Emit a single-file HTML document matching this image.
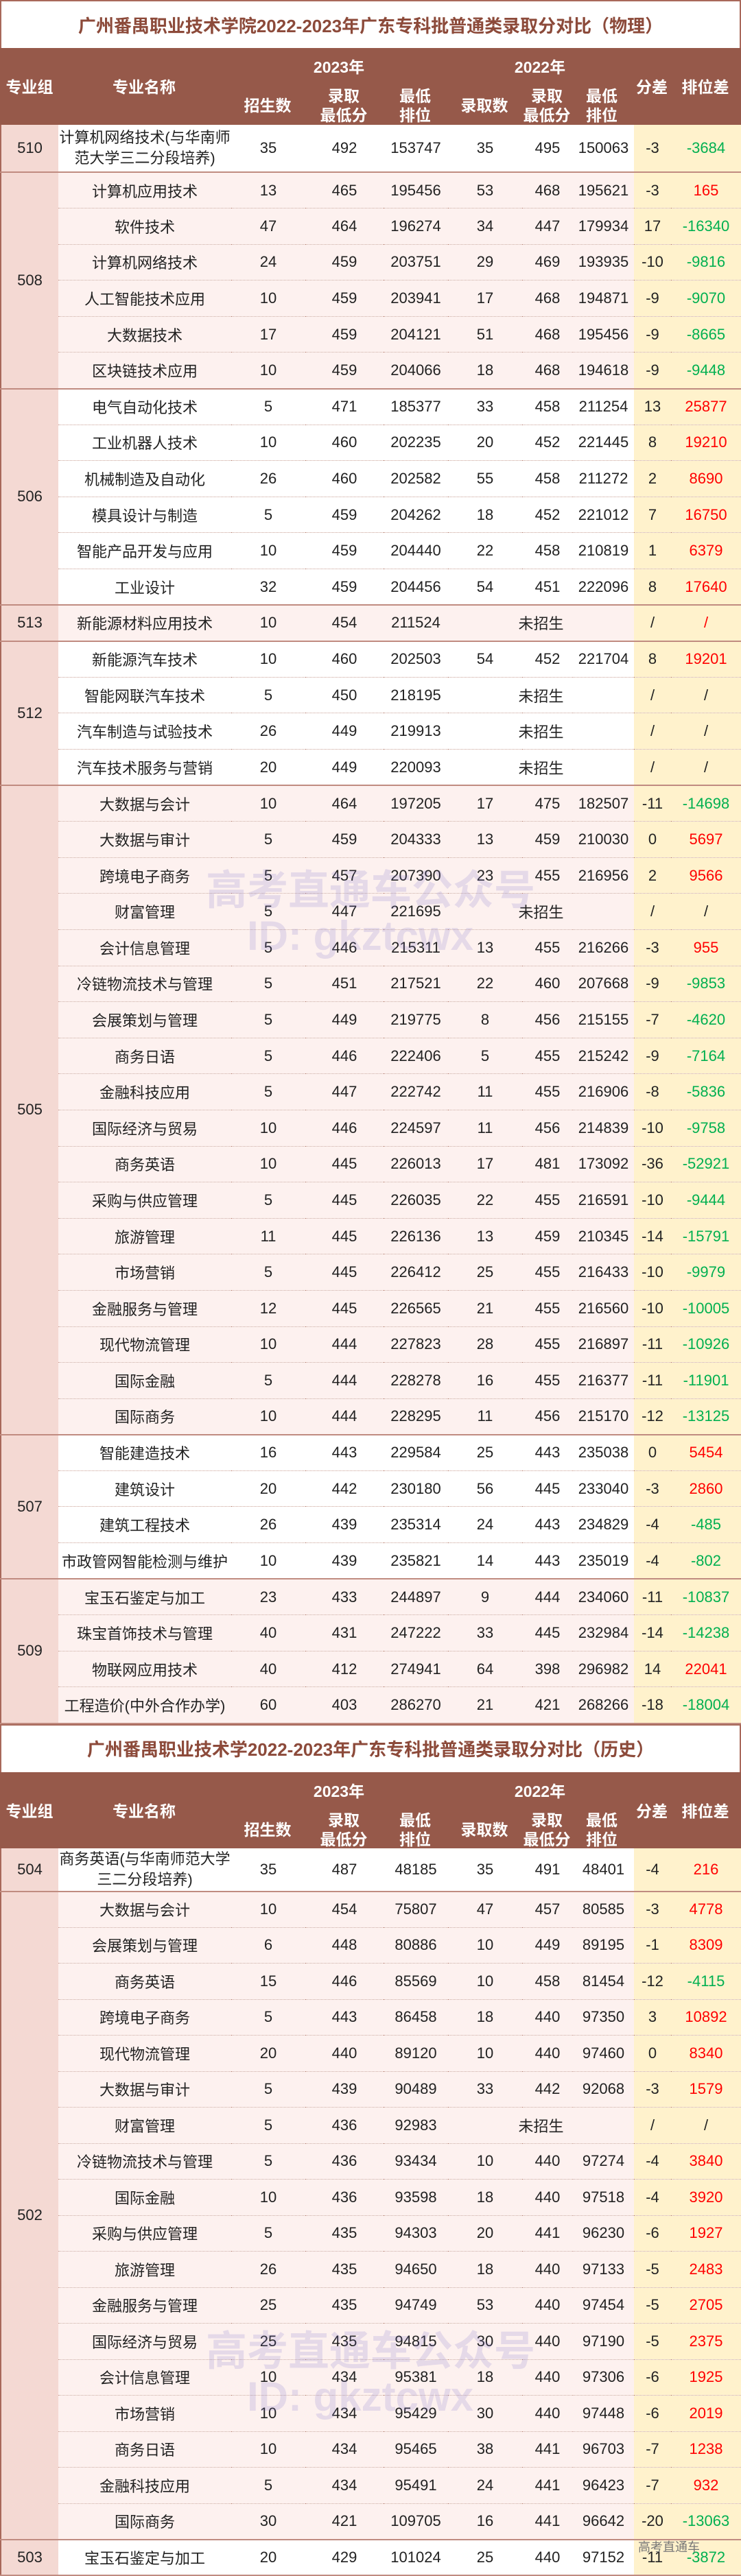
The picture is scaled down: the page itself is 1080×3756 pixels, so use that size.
<!DOCTYPE html>
<html><head><meta charset="utf-8">
<style>
*{margin:0;padding:0;box-sizing:border-box}
body{width:1080px;height:3756px;background:#fff;font-family:"Liberation Sans","Noto Sans CJK SC",sans-serif;color:#222;overflow:hidden;position:relative}
.title{height:70px;border-left:2px solid #A8685A;border-right:2px solid #A8685A;border-top:2px solid #A8685A;display:flex;align-items:center;justify-content:center;color:#8C4A3A;font-weight:bold;font-size:26px;background:#fff}
.hdr{height:112px;background:#96594A;position:relative;color:#fff;font-weight:bold;font-size:23px}
.hdr div{position:absolute;text-align:center;line-height:28px;transform:translate(-50%,-50%);white-space:nowrap}
table{border-collapse:collapse;table-layout:fixed;width:1080px;font-size:22px}
td{padding:0;text-align:center;vertical-align:middle;border-bottom:1px dotted #C9A095;white-space:nowrap;overflow:hidden}
td.g{background:#F4D9D3;border-bottom:2px solid #C08B80;border-left:2px solid #A8685A}
tr.last td{border-bottom:2px solid #C08B80}
td.y{background:#FFF2CC}
td.y2{background:#FFF2CC;border-right:2px solid #A8685A}
.p td:not(.g):not(.y):not(.y2){background:#FDF1EF}
td.n{white-space:normal;line-height:30px}
.r{color:#FF0000}.gr{color:#00B050}
.wm{position:absolute;color:rgba(120,110,200,.18);font-weight:bold;font-size:60px;pointer-events:none}
</style></head><body>

<div class="title">广州番禺职业技术学院2022-2023年广东专科批普通类录取分对比（物理）</div>
<div class="hdr">
<div style="left:43px;top:57px">专业组</div>
<div style="left:210px;top:57px">专业名称</div>
<div style="left:494px;top:28px">2023年</div>
<div style="left:787px;top:28px">2022年</div>
<div style="left:390px;top:84px">招生数</div>
<div style="left:501px;top:84px">录取<br>最低分</div>
<div style="left:605px;top:84px">最低<br>排位</div>
<div style="left:706px;top:84px">录取数</div>
<div style="left:797px;top:84px">录取<br>最低分</div>
<div style="left:877px;top:84px">最低<br>排位</div>
<div style="left:950px;top:57px">分差</div>
<div style="left:1028px;top:57px">排位差</div>
</div>
<table>
<colgroup><col style="width:84px"><col style="width:252px"><col style="width:108px"><col style="width:114px"><col style="width:94px"><col style="width:108px"><col style="width:74px"><col style="width:89px"><col style="width:54px"><col style="width:103px"></colgroup>
<tr class="last" style="height:69px"><td class="g">510</td><td class="n">计算机网络技术(与华南师范大学三二分段培养)</td><td>35</td><td>492</td><td>153747</td><td>35</td><td>495</td><td>150063</td><td class="y">-3</td><td class="y2 gr">-3684</td></tr>
<tbody class="p">
<tr style="height:52.6px"><td class="g" rowspan="6">508</td><td>计算机应用技术</td><td>13</td><td>465</td><td>195456</td><td>53</td><td>468</td><td>195621</td><td class="y">-3</td><td class="y2 r">165</td></tr>
<tr style="height:52.6px"><td>软件技术</td><td>47</td><td>464</td><td>196274</td><td>34</td><td>447</td><td>179934</td><td class="y">17</td><td class="y2 gr">-16340</td></tr>
<tr style="height:52.6px"><td>计算机网络技术</td><td>24</td><td>459</td><td>203751</td><td>29</td><td>469</td><td>193935</td><td class="y">-10</td><td class="y2 gr">-9816</td></tr>
<tr style="height:52.6px"><td>人工智能技术应用</td><td>10</td><td>459</td><td>203941</td><td>17</td><td>468</td><td>194871</td><td class="y">-9</td><td class="y2 gr">-9070</td></tr>
<tr style="height:52.6px"><td>大数据技术</td><td>17</td><td>459</td><td>204121</td><td>51</td><td>468</td><td>195456</td><td class="y">-9</td><td class="y2 gr">-8665</td></tr>
<tr class="last" style="height:52.6px"><td>区块链技术应用</td><td>10</td><td>459</td><td>204066</td><td>18</td><td>468</td><td>194618</td><td class="y">-9</td><td class="y2 gr">-9448</td></tr>
</tbody>
<tr style="height:52.6px"><td class="g" rowspan="6">506</td><td>电气自动化技术</td><td>5</td><td>471</td><td>185377</td><td>33</td><td>458</td><td>211254</td><td class="y">13</td><td class="y2 r">25877</td></tr>
<tr style="height:52.6px"><td>工业机器人技术</td><td>10</td><td>460</td><td>202235</td><td>20</td><td>452</td><td>221445</td><td class="y">8</td><td class="y2 r">19210</td></tr>
<tr style="height:52.6px"><td>机械制造及自动化</td><td>26</td><td>460</td><td>202582</td><td>55</td><td>458</td><td>211272</td><td class="y">2</td><td class="y2 r">8690</td></tr>
<tr style="height:52.6px"><td>模具设计与制造</td><td>5</td><td>459</td><td>204262</td><td>18</td><td>452</td><td>221012</td><td class="y">7</td><td class="y2 r">16750</td></tr>
<tr style="height:52.6px"><td>智能产品开发与应用</td><td>10</td><td>459</td><td>204440</td><td>22</td><td>458</td><td>210819</td><td class="y">1</td><td class="y2 r">6379</td></tr>
<tr class="last" style="height:52.6px"><td>工业设计</td><td>32</td><td>459</td><td>204456</td><td>54</td><td>451</td><td>222096</td><td class="y">8</td><td class="y2 r">17640</td></tr>
<tbody class="p">
<tr class="last" style="height:52.6px"><td class="g">513</td><td>新能源材料应用技术</td><td>10</td><td>454</td><td>211524</td><td colspan="3">未招生</td><td class="y">/</td><td class="y2 r">/</td></tr>
</tbody>
<tr style="height:52.6px"><td class="g" rowspan="4">512</td><td>新能源汽车技术</td><td>10</td><td>460</td><td>202503</td><td>54</td><td>452</td><td>221704</td><td class="y">8</td><td class="y2 r">19201</td></tr>
<tr style="height:52.6px"><td>智能网联汽车技术</td><td>5</td><td>450</td><td>218195</td><td colspan="3">未招生</td><td class="y">/</td><td class="y2">/</td></tr>
<tr style="height:52.6px"><td>汽车制造与试验技术</td><td>26</td><td>449</td><td>219913</td><td colspan="3">未招生</td><td class="y">/</td><td class="y2">/</td></tr>
<tr class="last" style="height:52.6px"><td>汽车技术服务与营销</td><td>20</td><td>449</td><td>220093</td><td colspan="3">未招生</td><td class="y">/</td><td class="y2">/</td></tr>
<tbody class="p">
<tr style="height:52.6px"><td class="g" rowspan="18">505</td><td>大数据与会计</td><td>10</td><td>464</td><td>197205</td><td>17</td><td>475</td><td>182507</td><td class="y">-11</td><td class="y2 gr">-14698</td></tr>
<tr style="height:52.6px"><td>大数据与审计</td><td>5</td><td>459</td><td>204333</td><td>13</td><td>459</td><td>210030</td><td class="y">0</td><td class="y2 r">5697</td></tr>
<tr style="height:52.6px"><td>跨境电子商务</td><td>5</td><td>457</td><td>207390</td><td>23</td><td>455</td><td>216956</td><td class="y">2</td><td class="y2 r">9566</td></tr>
<tr style="height:52.6px"><td>财富管理</td><td>5</td><td>447</td><td>221695</td><td colspan="3">未招生</td><td class="y">/</td><td class="y2">/</td></tr>
<tr style="height:52.6px"><td>会计信息管理</td><td>5</td><td>446</td><td>215311</td><td>13</td><td>455</td><td>216266</td><td class="y">-3</td><td class="y2 r">955</td></tr>
<tr style="height:52.6px"><td>冷链物流技术与管理</td><td>5</td><td>451</td><td>217521</td><td>22</td><td>460</td><td>207668</td><td class="y">-9</td><td class="y2 gr">-9853</td></tr>
<tr style="height:52.6px"><td>会展策划与管理</td><td>5</td><td>449</td><td>219775</td><td>8</td><td>456</td><td>215155</td><td class="y">-7</td><td class="y2 gr">-4620</td></tr>
<tr style="height:52.6px"><td>商务日语</td><td>5</td><td>446</td><td>222406</td><td>5</td><td>455</td><td>215242</td><td class="y">-9</td><td class="y2 gr">-7164</td></tr>
<tr style="height:52.6px"><td>金融科技应用</td><td>5</td><td>447</td><td>222742</td><td>11</td><td>455</td><td>216906</td><td class="y">-8</td><td class="y2 gr">-5836</td></tr>
<tr style="height:52.6px"><td>国际经济与贸易</td><td>10</td><td>446</td><td>224597</td><td>11</td><td>456</td><td>214839</td><td class="y">-10</td><td class="y2 gr">-9758</td></tr>
<tr style="height:52.6px"><td>商务英语</td><td>10</td><td>445</td><td>226013</td><td>17</td><td>481</td><td>173092</td><td class="y">-36</td><td class="y2 gr">-52921</td></tr>
<tr style="height:52.6px"><td>采购与供应管理</td><td>5</td><td>445</td><td>226035</td><td>22</td><td>455</td><td>216591</td><td class="y">-10</td><td class="y2 gr">-9444</td></tr>
<tr style="height:52.6px"><td>旅游管理</td><td>11</td><td>445</td><td>226136</td><td>13</td><td>459</td><td>210345</td><td class="y">-14</td><td class="y2 gr">-15791</td></tr>
<tr style="height:52.6px"><td>市场营销</td><td>5</td><td>445</td><td>226412</td><td>25</td><td>455</td><td>216433</td><td class="y">-10</td><td class="y2 gr">-9979</td></tr>
<tr style="height:52.6px"><td>金融服务与管理</td><td>12</td><td>445</td><td>226565</td><td>21</td><td>455</td><td>216560</td><td class="y">-10</td><td class="y2 gr">-10005</td></tr>
<tr style="height:52.6px"><td>现代物流管理</td><td>10</td><td>444</td><td>227823</td><td>28</td><td>455</td><td>216897</td><td class="y">-11</td><td class="y2 gr">-10926</td></tr>
<tr style="height:52.6px"><td>国际金融</td><td>5</td><td>444</td><td>228278</td><td>16</td><td>455</td><td>216377</td><td class="y">-11</td><td class="y2 gr">-11901</td></tr>
<tr class="last" style="height:52.6px"><td>国际商务</td><td>10</td><td>444</td><td>228295</td><td>11</td><td>456</td><td>215170</td><td class="y">-12</td><td class="y2 gr">-13125</td></tr>
</tbody>
<tr style="height:52.6px"><td class="g" rowspan="4">507</td><td>智能建造技术</td><td>16</td><td>443</td><td>229584</td><td>25</td><td>443</td><td>235038</td><td class="y">0</td><td class="y2 r">5454</td></tr>
<tr style="height:52.6px"><td>建筑设计</td><td>20</td><td>442</td><td>230180</td><td>56</td><td>445</td><td>233040</td><td class="y">-3</td><td class="y2 r">2860</td></tr>
<tr style="height:52.6px"><td>建筑工程技术</td><td>26</td><td>439</td><td>235314</td><td>24</td><td>443</td><td>234829</td><td class="y">-4</td><td class="y2 gr">-485</td></tr>
<tr class="last" style="height:52.6px"><td>市政管网智能检测与维护</td><td>10</td><td>439</td><td>235821</td><td>14</td><td>443</td><td>235019</td><td class="y">-4</td><td class="y2 gr">-802</td></tr>
<tbody class="p">
<tr style="height:52.6px"><td class="g" rowspan="4">509</td><td>宝玉石鉴定与加工</td><td>23</td><td>433</td><td>244897</td><td>9</td><td>444</td><td>234060</td><td class="y">-11</td><td class="y2 gr">-10837</td></tr>
<tr style="height:52.6px"><td>珠宝首饰技术与管理</td><td>40</td><td>431</td><td>247222</td><td>33</td><td>445</td><td>232984</td><td class="y">-14</td><td class="y2 gr">-14238</td></tr>
<tr style="height:52.6px"><td>物联网应用技术</td><td>40</td><td>412</td><td>274941</td><td>64</td><td>398</td><td>296982</td><td class="y">14</td><td class="y2 r">22041</td></tr>
<tr class="last" style="height:52.6px"><td>工程造价(中外合作办学)</td><td>60</td><td>403</td><td>286270</td><td>21</td><td>421</td><td>268266</td><td class="y">-18</td><td class="y2 gr">-18004</td></tr>
</tbody>
</table>

<div class="title">广州番禺职业技术学2022-2023年广东专科批普通类录取分对比（历史）</div>
<div class="hdr" style="height:111px">
<div style="left:43px;top:57px">专业组</div>
<div style="left:210px;top:57px">专业名称</div>
<div style="left:494px;top:28px">2023年</div>
<div style="left:787px;top:28px">2022年</div>
<div style="left:390px;top:84px">招生数</div>
<div style="left:501px;top:84px">录取<br>最低分</div>
<div style="left:605px;top:84px">最低<br>排位</div>
<div style="left:706px;top:84px">录取数</div>
<div style="left:797px;top:84px">录取<br>最低分</div>
<div style="left:877px;top:84px">最低<br>排位</div>
<div style="left:950px;top:57px">分差</div>
<div style="left:1028px;top:57px">排位差</div>
</div>
<table>
<colgroup><col style="width:84px"><col style="width:252px"><col style="width:108px"><col style="width:114px"><col style="width:94px"><col style="width:108px"><col style="width:74px"><col style="width:89px"><col style="width:54px"><col style="width:103px"></colgroup>
<tr class="last" style="height:63px"><td class="g">504</td><td class="n">商务英语(与华南师范大学三二分段培养)</td><td>35</td><td>487</td><td>48185</td><td>35</td><td>491</td><td>48401</td><td class="y">-4</td><td class="y2 r">216</td></tr>
<tbody class="p">
<tr style="height:52.5px"><td class="g" rowspan="18">502</td><td>大数据与会计</td><td>10</td><td>454</td><td>75807</td><td>47</td><td>457</td><td>80585</td><td class="y">-3</td><td class="y2 r">4778</td></tr>
<tr style="height:52.5px"><td>会展策划与管理</td><td>6</td><td>448</td><td>80886</td><td>10</td><td>449</td><td>89195</td><td class="y">-1</td><td class="y2 r">8309</td></tr>
<tr style="height:52.5px"><td>商务英语</td><td>15</td><td>446</td><td>85569</td><td>10</td><td>458</td><td>81454</td><td class="y">-12</td><td class="y2 gr">-4115</td></tr>
<tr style="height:52.5px"><td>跨境电子商务</td><td>5</td><td>443</td><td>86458</td><td>18</td><td>440</td><td>97350</td><td class="y">3</td><td class="y2 r">10892</td></tr>
<tr style="height:52.5px"><td>现代物流管理</td><td>20</td><td>440</td><td>89120</td><td>10</td><td>440</td><td>97460</td><td class="y">0</td><td class="y2 r">8340</td></tr>
<tr style="height:52.5px"><td>大数据与审计</td><td>5</td><td>439</td><td>90489</td><td>33</td><td>442</td><td>92068</td><td class="y">-3</td><td class="y2 r">1579</td></tr>
<tr style="height:52.5px"><td>财富管理</td><td>5</td><td>436</td><td>92983</td><td colspan="3">未招生</td><td class="y">/</td><td class="y2">/</td></tr>
<tr style="height:52.5px"><td>冷链物流技术与管理</td><td>5</td><td>436</td><td>93434</td><td>10</td><td>440</td><td>97274</td><td class="y">-4</td><td class="y2 r">3840</td></tr>
<tr style="height:52.5px"><td>国际金融</td><td>10</td><td>436</td><td>93598</td><td>18</td><td>440</td><td>97518</td><td class="y">-4</td><td class="y2 r">3920</td></tr>
<tr style="height:52.5px"><td>采购与供应管理</td><td>5</td><td>435</td><td>94303</td><td>20</td><td>441</td><td>96230</td><td class="y">-6</td><td class="y2 r">1927</td></tr>
<tr style="height:52.5px"><td>旅游管理</td><td>26</td><td>435</td><td>94650</td><td>18</td><td>440</td><td>97133</td><td class="y">-5</td><td class="y2 r">2483</td></tr>
<tr style="height:52.5px"><td>金融服务与管理</td><td>25</td><td>435</td><td>94749</td><td>53</td><td>440</td><td>97454</td><td class="y">-5</td><td class="y2 r">2705</td></tr>
<tr style="height:52.5px"><td>国际经济与贸易</td><td>25</td><td>435</td><td>94815</td><td>30</td><td>440</td><td>97190</td><td class="y">-5</td><td class="y2 r">2375</td></tr>
<tr style="height:52.5px"><td>会计信息管理</td><td>10</td><td>434</td><td>95381</td><td>18</td><td>440</td><td>97306</td><td class="y">-6</td><td class="y2 r">1925</td></tr>
<tr style="height:52.5px"><td>市场营销</td><td>10</td><td>434</td><td>95429</td><td>30</td><td>440</td><td>97448</td><td class="y">-6</td><td class="y2 r">2019</td></tr>
<tr style="height:52.5px"><td>商务日语</td><td>10</td><td>434</td><td>95465</td><td>38</td><td>441</td><td>96703</td><td class="y">-7</td><td class="y2 r">1238</td></tr>
<tr style="height:52.5px"><td>金融科技应用</td><td>5</td><td>434</td><td>95491</td><td>24</td><td>441</td><td>96423</td><td class="y">-7</td><td class="y2 r">932</td></tr>
<tr class="last" style="height:52.5px"><td>国际商务</td><td>30</td><td>421</td><td>109705</td><td>16</td><td>441</td><td>96642</td><td class="y">-20</td><td class="y2 gr">-13063</td></tr>
</tbody>
<tr class="last" style="height:52.5px"><td class="g">503</td><td>宝玉石鉴定与加工</td><td>20</td><td>429</td><td>101024</td><td>25</td><td>440</td><td>97152</td><td class="y">-11</td><td class="y2 gr">-3872</td></tr>
</table>

<div class="wm" style="left:300px;top:1250px">高考直通车公众号</div>
<div class="wm" style="left:360px;top:1330px">ID: gkztcwx</div>
<div class="wm" style="left:300px;top:3380px">高考直通车公众号</div>
<div class="wm" style="left:360px;top:3460px">ID: gkztcwx</div>
<div style="position:absolute;left:930px;top:3700px;font-size:18px;color:#777">高考直通车</div>
</body></html>
